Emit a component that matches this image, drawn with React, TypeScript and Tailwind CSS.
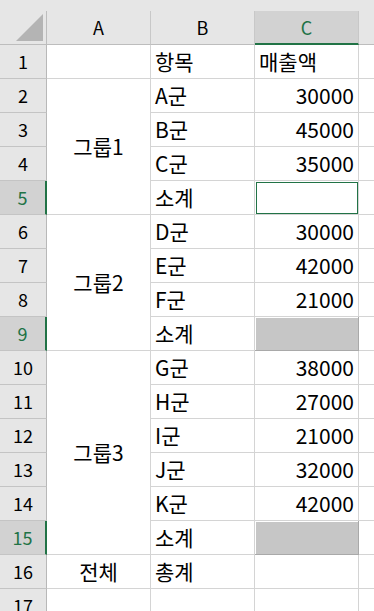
import React from "react";

type Row = {
  n: number;
  item?: string;
  sales?: number | string;
  mark?: "active" | "fill";
};

const rows: Row[] = [
  { n: 1, item: "항목", sales: "매출액" },
  { n: 2, item: "A군", sales: 30000 },
  { n: 3, item: "B군", sales: 45000 },
  { n: 4, item: "C군", sales: 35000 },
  { n: 5, item: "소계", mark: "active" },
  { n: 6, item: "D군", sales: 30000 },
  { n: 7, item: "E군", sales: 42000 },
  { n: 8, item: "F군", sales: 21000 },
  { n: 9, item: "소계", mark: "fill" },
  { n: 10, item: "G군", sales: 38000 },
  { n: 11, item: "H군", sales: 27000 },
  { n: 12, item: "I군", sales: 21000 },
  { n: 13, item: "J군", sales: 32000 },
  { n: 14, item: "K군", sales: 42000 },
  { n: 15, item: "소계", mark: "fill" },
  { n: 16, item: "총계" },
  { n: 17 },
];

// merged cells in column A, keyed by their first row
const groups: Record<number, { label: string; span: string }> = {
  2: { label: "그룹1", span: "row-span-4" },
  6: { label: "그룹2", span: "row-span-4" },
  10: { label: "그룹3", span: "row-span-6" },
  16: { label: "전체", span: "" },
};
const merged = new Set([3, 4, 5, 7, 8, 9, 11, 12, 13, 14, 15]);
const selectedRows = new Set([5, 9, 15]);

const cell = "border-b border-r border-[#d4d4d4] bg-white flex items-center text-[21px] text-black";

function RowHeader({ n }: { n: number }) {
  const sel = selectedRows.has(n);
  return (
    <div
      className={
        "flex items-center justify-center border-b border-[#c4c4c4] text-[18px] " +
        (sel
          ? "bg-[#d2d2d2] text-[#217346] border-r-2 border-r-[#217346]"
          : "bg-[#e6e6e6] text-black border-r border-r-[#b8b8b8]")
      }
    >
      {n}
    </div>
  );
}

function SalesCell({ row }: { row: Row }) {
  if (row.mark === "active") {
    return (
      <div className={cell + " relative"}>
        <div className="absolute top-px left-px right-0 bottom-0 border border-[#217346]" />
      </div>
    );
  }
  if (row.mark === "fill") {
    return (
      <div className="relative bg-white border-b border-r border-[#a9a9a9]">
        <div className="absolute top-px left-px right-0 bottom-0 bg-[#c6c6c6]" />
      </div>
    );
  }
  const isNum = typeof row.sales === "number";
  return (
    <div className={cell + (isNum ? " justify-end pr-[4px]" : " pl-[4px]")}>
      {row.sales}
    </div>
  );
}

export default function App() {
  return (
    <div className="w-[374px] h-[611px] overflow-hidden bg-white font-['Noto_Sans_CJK_KR',sans-serif]">
      <div className="h-[11px] bg-[#e6e6e6]" />
      <div className="grid grid-cols-[47px_104px_104px_104px_1fr] auto-rows-[34px]">
        {/* column headers */}
        <div className="relative bg-[#e6e6e6] border-b border-r border-[#bdbdbd]">
          <svg className="absolute right-[3px] bottom-[3px]" width="27" height="27" viewBox="0 0 27 27">
            <polygon points="0,27 27,0 27,27" fill="#b4b4b4" />
          </svg>
        </div>
        {["A", "B"].map((c) => (
          <div
            key={c}
            className="flex items-center justify-center bg-[#e6e6e6] border-b border-b-[#bdbdbd] border-r border-r-[#c8c8c8] text-[18px] text-black"
          >
            {c}
          </div>
        ))}
        <div className="flex items-center justify-center bg-[#d2d2d2] border-b-2 border-b-[#217346] border-r border-r-[#c8c8c8] text-[18px] text-[#217346]">
          C
        </div>
        <div className="bg-[#e6e6e6] border-b border-[#bdbdbd]" />

        {rows.map((row) => (
          <React.Fragment key={row.n}>
            <RowHeader n={row.n} />
            {!merged.has(row.n) &&
              (groups[row.n] ? (
                <div className={cell + " justify-center " + groups[row.n].span}>
                  {groups[row.n].label}
                </div>
              ) : (
                <div className={cell} />
              ))}
            <div className={cell + " pl-[4px]"}>{row.item}</div>
            <SalesCell row={row} />
            <div className="border-b border-[#d4d4d4] bg-white" />
          </React.Fragment>
        ))}
      </div>
    </div>
  );
}
